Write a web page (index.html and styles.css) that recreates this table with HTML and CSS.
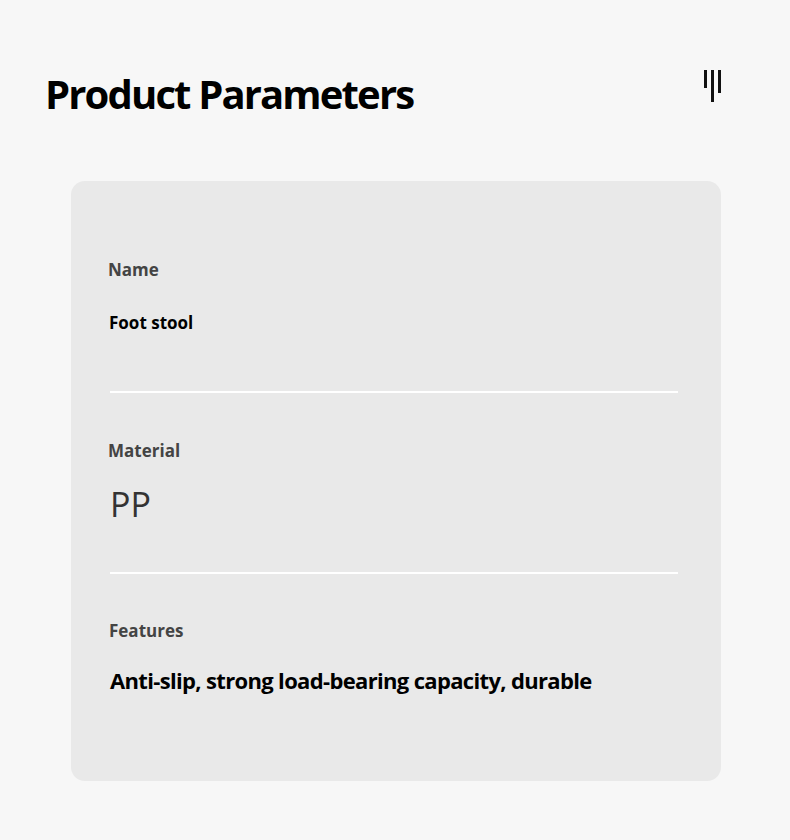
FILE: index.html
```html
<!DOCTYPE html>
<html>
<head>
<meta charset="utf-8">
<link rel="stylesheet" href="styles.css">
</head>
<body>
<div class="page">
  <header class="header">
    <h1 class="title">Product Parameters</h1>
    <svg class="logo" width="24" height="40" viewBox="0 0 24 40">
      <rect x="2" y="0" width="3" height="18" fill="#111"/>
      <rect x="9" y="0" width="3" height="32" fill="#111"/>
      <rect x="16" y="0" width="3" height="23" fill="#111"/>
    </svg>
  </header>
  <section class="card">
    <div class="row row-name">
      <div class="label">Name</div>
      <div class="value value-sm">Foot stool</div>
    </div>
    <div class="divider"></div>
    <div class="row row-material">
      <div class="label">Material</div>
      <div class="value value-lg">PP</div>
    </div>
    <div class="divider"></div>
    <div class="row row-features">
      <div class="label">Features</div>
      <div class="value value-md">Anti-slip, strong load-bearing capacity, durable</div>
    </div>
  </section>
</div>
</body>
</html>
```

FILE: styles.css
```css
html, body {
  margin: 0;
  padding: 0;
  background: #f7f7f7;
}
body {
  font-family: "Open Sans", "Noto Sans", sans-serif;
  color: #000;
}
.page {
  width: 790px;
  height: 840px;
  box-sizing: border-box;
  padding: 68px 0 0 0;
}
.header {
  display: flex;
  justify-content: space-between;
  align-items: flex-start;
  padding: 0 64px 0 45px;
}
.title {
  margin: 0;
  font-size: 40px;
  font-weight: 700;
  line-height: 52px;
  letter-spacing: -1.85px;
}
.logo {
  margin-top: 2px;
}
.card {
  margin: 61px 69px 0 71px;
  height: 600px;
  box-sizing: border-box;
  background: #e9e9e9;
  border-radius: 14px;
  padding: 78px 43px 0 37px;
}
.row {
  display: flex;
  flex-direction: column;
}
.label {
  font-size: 17px;
  font-weight: 700;
  color: #444;
  line-height: 22px;
}
.value {
  color: #000;
}
.value-sm {
  font-size: 17px;
  font-weight: 700;
  margin-top: 31px;
  line-height: 22px;
  padding-left: 1px;
}
.value-lg {
  font-size: 34px;
  font-weight: 400;
  color: #333;
  margin-top: 22px;
  line-height: 40px;
  padding-left: 2px;
}
.value-md {
  font-size: 22px;
  font-weight: 700;
  margin-top: 23px;
  line-height: 30px;
  padding-left: 1px;
  letter-spacing: -0.66px;
}
.divider {
  height: 2px;
  background: #fff;
  margin-left: 2px;
}
.row-name .value { margin-bottom: 57px; }
.row-material { margin-top: 47px; }
.row-material .value { margin-bottom: 48px; }
.row-features { margin-top: 46px; padding-left: 1px; }
```
